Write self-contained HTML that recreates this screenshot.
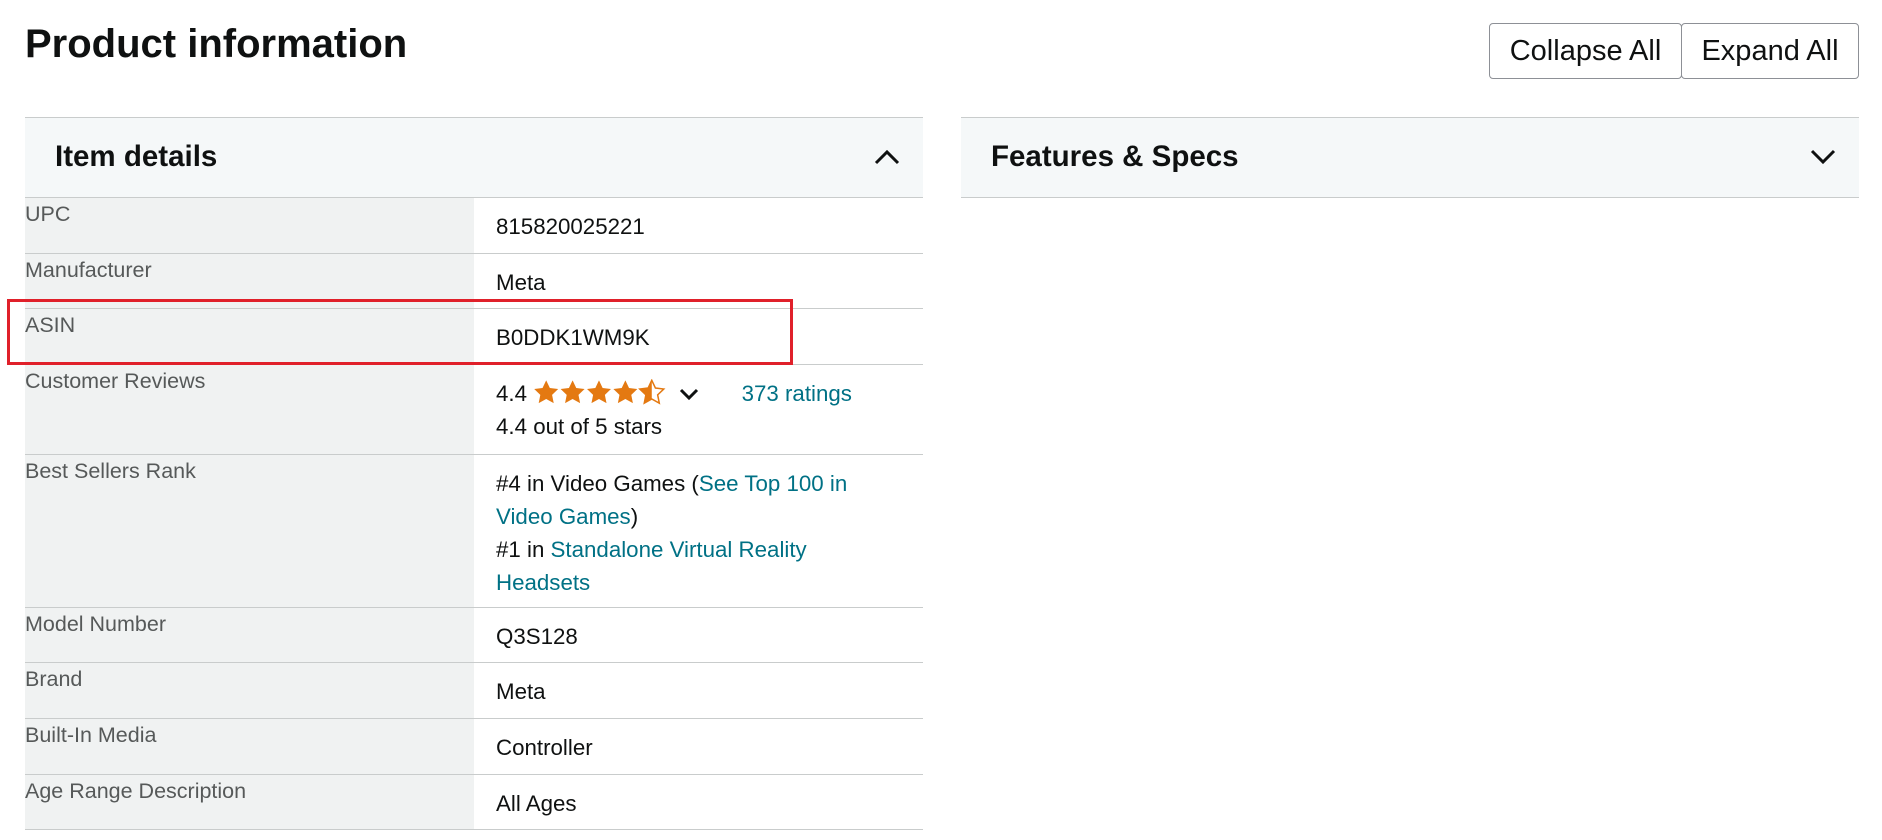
<!DOCTYPE html>
<html><head><style>
body{margin:0;width:1882px;height:840px;background:#fff;font-family:"Liberation Sans",Arial,sans-serif;position:relative;overflow:hidden;color:#0f1111}
h1{position:absolute;left:25px;top:22px;margin:0;font-size:40px;font-weight:bold}
.btn{position:absolute;top:23px;height:56px;border:1px solid #8d9096;border-radius:4px;box-sizing:border-box;font-size:29px;line-height:54px;text-align:center;background:#fff}
.panel{position:absolute;top:117px;border-top:1px solid #c9cccc}
.hd{height:79px;background:#f5f8f9;border-bottom:1px solid #c9cccc;position:relative}
.hd span{position:absolute;left:30px;top:22px;font-size:29.5px;font-weight:bold}
.hd svg{position:absolute;right:22px;top:30px}
.row{display:flex;border-bottom:1px solid #c9cccc;font-size:21.5px}
.lab{width:449px;background:#f0f2f2;color:#565959;line-height:33px;flex:none}
.val{padding:12px 0 0 22px;line-height:33px;flex:1;font-size:22.3px}
a{color:#007185;text-decoration:none}
</style></head><body>
<h1>Product information</h1>
<div class="btn" style="left:1489px;width:193px">Collapse All</div>
<div class="btn" style="left:1681px;width:178px">Expand All</div>
<div class="panel" style="left:25px;width:898px">
<div class="hd"><span>Item details</span><svg width="28" height="18" viewBox="0 0 28 18"><path d="M3 15L14 4L25 15" fill="none" stroke="#0f1111" stroke-width="3"/></svg></div>
<div class="row" style="height:55px"><div class="lab">UPC</div><div class="val">815820025221</div></div>
<div class="row" style="height:54px"><div class="lab">Manufacturer</div><div class="val">Meta</div></div>
<div class="row" style="height:55px"><div class="lab">ASIN</div><div class="val">B0DDK1WM9K</div></div>
<div class="row" style="height:89px"><div class="lab">Customer Reviews</div><div class="val">4.4 <svg width="134" height="27" viewBox="0 0 132 26" style="vertical-align:-5px">
<defs><path id="s" d="M13 1l3.6 7.6 8.2 1-6 5.7 1.6 8.2L13 19.4 5.6 23.5l1.6-8.2-6-5.7 8.2-1z"/></defs>
<use href="#s" fill="#e47911"/><use href="#s" x="26" fill="#e47911"/><use href="#s" x="52" fill="#e47911"/><use href="#s" x="78" fill="#e47911"/>
<use href="#s" x="104" fill="none" stroke="#e47911" stroke-width="1.5"/><path d="M117 1v18.4l-7.4 4.1 1.6-8.2-6-5.7 8.2-1z" fill="#e47911"/></svg> <svg width="20" height="14" viewBox="0 0 20 14" style="margin-left:6px"><path d="M2 3l8 8 8-8" fill="none" stroke="#0f1111" stroke-width="3"/></svg> <a style="margin-left:36px">373 ratings</a><br>4.4 out of 5 stars</div></div>
<div class="row" style="height:152px"><div class="lab">Best Sellers Rank</div><div class="val">#4 in Video Games (<a>See Top 100 in<br>Video Games</a>)<br>#1 in <a>Standalone Virtual Reality<br>Headsets</a></div></div>
<div class="row" style="height:54px"><div class="lab">Model Number</div><div class="val">Q3S128</div></div>
<div class="row" style="height:55px"><div class="lab">Brand</div><div class="val">Meta</div></div>
<div class="row" style="height:55px"><div class="lab">Built-In Media</div><div class="val">Controller</div></div>
<div class="row" style="height:54px"><div class="lab">Age Range Description</div><div class="val">All Ages</div></div>
</div>
<div class="panel" style="left:961px;width:898px">
<div class="hd"><span>Features &amp; Specs</span><svg width="28" height="18" viewBox="0 0 28 18"><path d="M3 3L14 14L25 3" fill="none" stroke="#0f1111" stroke-width="3"/></svg></div>
</div>
<div style="position:absolute;left:7px;top:299px;width:786px;height:66px;border:3px solid #e0202a;box-sizing:border-box"></div>
</body></html>
